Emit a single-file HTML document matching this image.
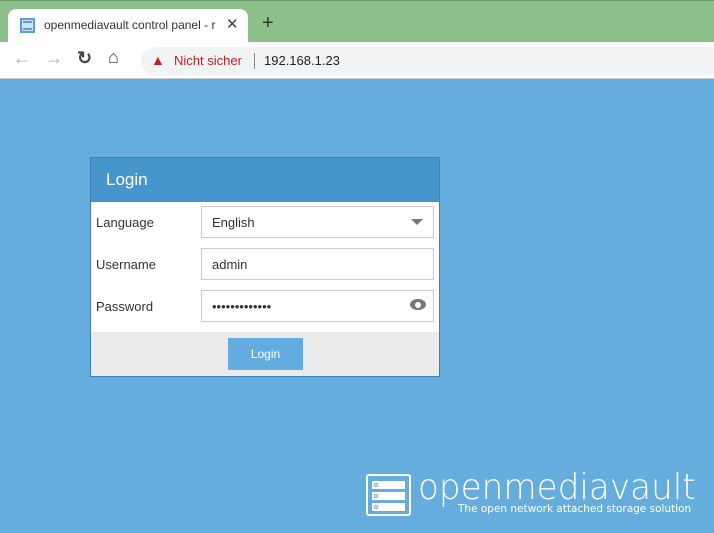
<!DOCTYPE html>
<html><head><style>
*{margin:0;padding:0;box-sizing:border-box}
body{width:714px;height:533px;overflow:hidden;background:#64addd;font-family:"Liberation Sans",sans-serif;position:relative}
.abs{position:absolute}
.lbl{position:absolute;left:5px;font-size:13px;color:#333}
.inp{position:absolute;left:110px;width:233px;height:32px;border:1px solid #ccc;background:#fff;font-size:13px;color:#333;padding:8px 10px}
.bar{position:absolute;left:372px;width:33px;height:8px;background:#fff}
.dot{position:absolute;left:374px;width:4px;height:4px;border-radius:50%;border:1px solid #64addd}
</style></head><body>
<div class="abs" style="left:0;top:0;width:714px;height:42px;background:#8dbf8b;border-top:1px solid #6f9f6e"></div>
<div class="abs" style="left:8px;top:9px;width:240px;height:34px;background:#fff;border-radius:8px 8px 0 0"></div>
<div class="abs" style="left:20px;top:18px;width:15px;height:15px;border:2px solid #5a9ed6;background:#cfe3f5"></div>
<div class="abs" style="left:23px;top:21px;width:9px;height:9px;border-top:2px solid #5a9ed6;border-bottom:2px solid #5a9ed6"></div>
<div class="abs" style="left:44px;top:18px;font-size:12px;color:#333;width:180px;white-space:nowrap;overflow:hidden">openmediavault control panel - r</div>
<div class="abs" style="left:226px;top:15px;font-size:15px;color:#444">✕</div>
<div class="abs" style="left:262px;top:12px;font-size:20px;color:#333">+</div>
<div class="abs" style="left:0;top:42px;width:714px;height:37px;background:#fff;border-bottom:1px solid #ccc"></div>
<div class="abs" style="left:13px;top:48px;font-size:18px;color:#aaa">←</div>
<div class="abs" style="left:45px;top:48px;font-size:18px;color:#aaa">→</div>
<div class="abs" style="left:77px;top:48px;font-size:18px;color:#444;font-weight:bold">↻</div>
<div class="abs" style="left:108px;top:47px;font-size:18px;color:#444">⌂</div>
<div class="abs" style="left:141px;top:47px;width:580px;height:28px;background:#f1f3f4;border-radius:14px"></div>
<div class="abs" style="left:151px;top:52px;font-size:14px;color:#c5221f">▲</div>
<div class="abs" style="left:174px;top:53px;font-size:13px;color:#c5221f">Nicht sicher</div>
<div class="abs" style="left:254px;top:53px;width:1px;height:16px;background:#888"></div>
<div class="abs" style="left:264px;top:53px;font-size:13px;color:#222">192.168.1.23</div>

<div class="abs" style="left:90px;top:157px;width:350px;height:220px;border:1px solid #3a83c0;background:#fff">
 <div class="abs" style="left:0;top:0;width:348px;height:44px;background:#4695cb;color:#fff;font-size:17px;padding:12px 15px">Login</div>
 <div class="lbl" style="top:57px">Language</div>
 <div class="inp" style="top:48px">English<span style="position:absolute;right:10px;top:12px;width:0;height:0;border-left:6px solid transparent;border-right:6px solid transparent;border-top:6px solid #777"></span></div>
 <div class="lbl" style="top:99px">Username</div>
 <div class="inp" style="top:90px">admin</div>
 <div class="lbl" style="top:141px">Password</div>
 <div class="inp" style="top:132px">•••••••••••••<span style="position:absolute;right:7px;top:8px;width:16px;height:11px;border-radius:50%;background:#777"></span><span style="position:absolute;right:12px;top:11px;width:6px;height:6px;border-radius:50%;background:#fff"></span></div>
 <div class="abs" style="left:0;top:174px;width:348px;height:44px;background:#ebebeb"></div>
 <div class="abs" style="left:137px;top:180px;width:75px;height:32px;background:#62acdf;color:#fff;font-size:12px;text-align:center;line-height:32px">Login</div>
</div>

<div class="abs" style="left:366px;top:474px;width:45px;height:42px;border:2px solid #fff;border-radius:3px"></div>
<div class="bar" style="top:481px"></div><div class="dot" style="top:483px"></div>
<div class="bar" style="top:492px"></div><div class="dot" style="top:494px"></div>
<div class="bar" style="top:503px"></div><div class="dot" style="top:505px"></div>
<div class="abs" style="left:418px;top:468px;font-size:36px;color:#fff;font-family:'DejaVu Sans',sans-serif;font-weight:200;line-height:40px;transform-origin:0 0;transform:scaleX(0.95);white-space:nowrap">openmediavault</div>
<div class="abs" style="left:458px;top:503px;font-size:10.5px;color:#fff;font-family:'DejaVu Sans',sans-serif;white-space:nowrap">The open network attached storage solution</div>
</body></html>
